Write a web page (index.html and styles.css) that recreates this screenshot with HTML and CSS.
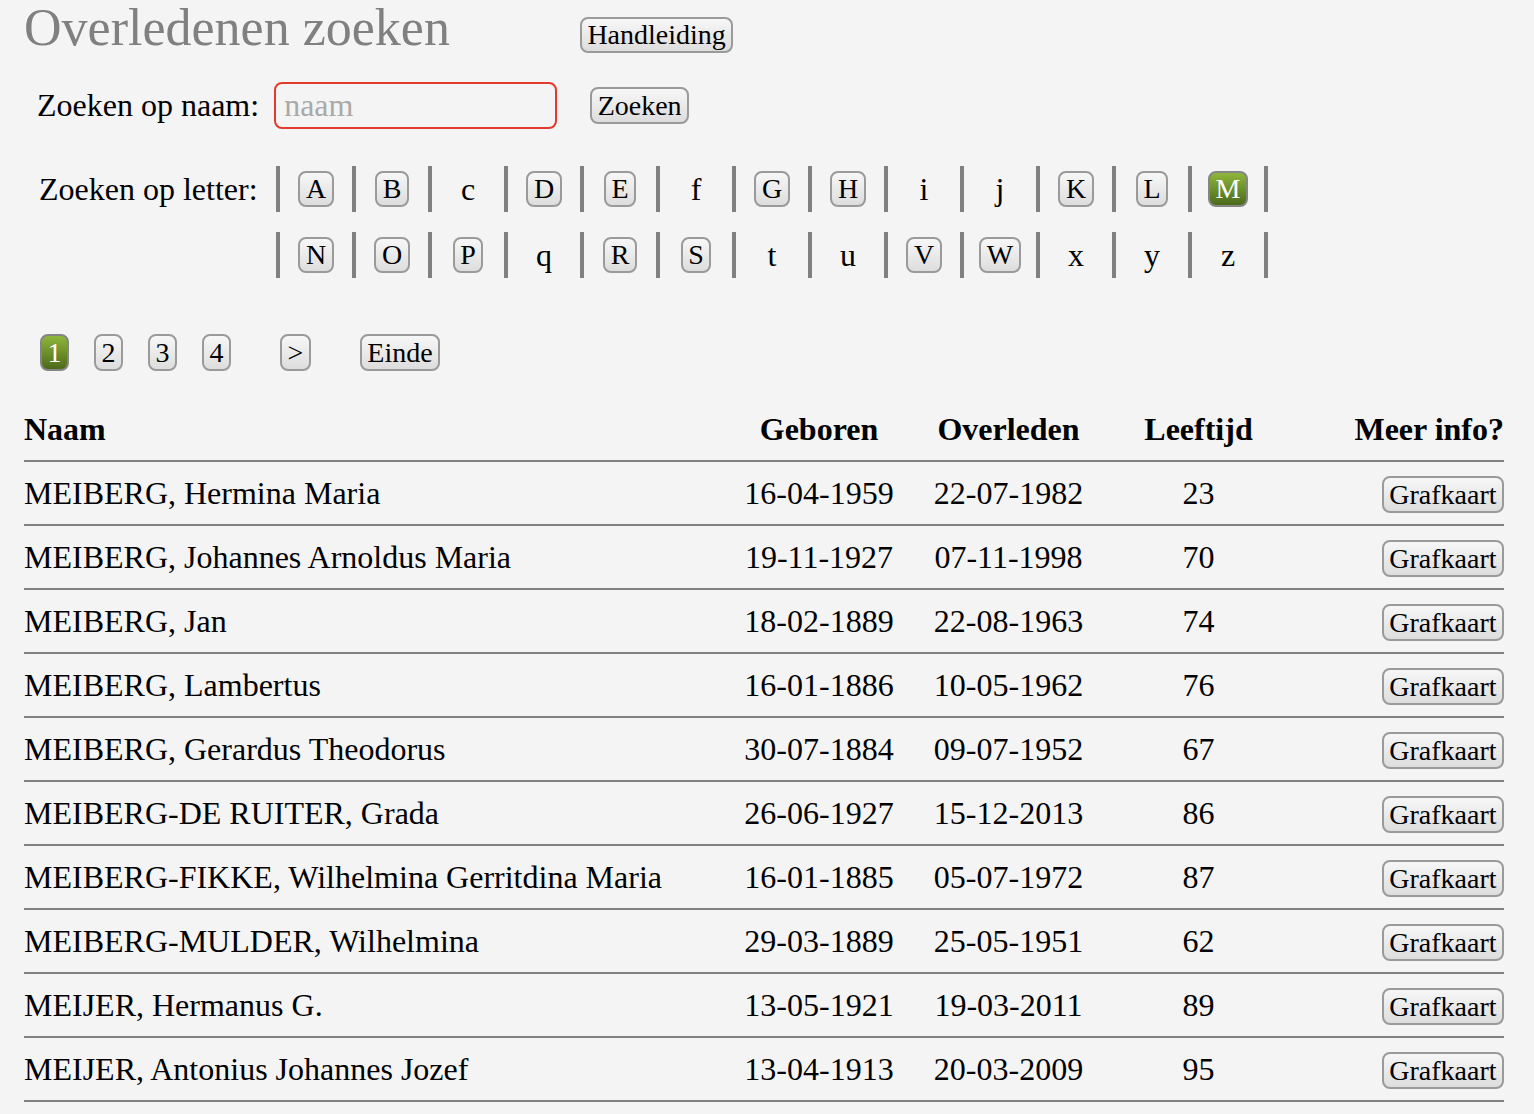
FILE: index.html
```html
<!DOCTYPE html>
<html lang="nl">
<head>
<meta charset="utf-8">
<title>Overledenen zoeken</title>
<link rel="stylesheet" href="styles.css">
</head>
<body>
<div class="page">
  <div class="title-row">
    <h1 class="title">Overledenen zoeken</h1>
    <button class="btn btn-manual" type="button">Handleiding</button>
  </div>

  <form class="name-row">
    <label class="label name-label" for="naam">Zoeken op naam:</label>
    <input class="name-input" id="naam" type="text" placeholder="naam">
    <button class="btn btn-search" type="button">Zoeken</button>
  </form>

  <div class="letter-row">
    <span class="label letter-label">Zoeken op letter:</span>
    <div class="letters">
      <div class="letter-line">
        <div class="cell"><button class="btn btn-letter" type="button">A</button></div>
        <div class="cell"><button class="btn btn-letter" type="button">B</button></div>
        <div class="cell"><span class="plain">c</span></div>
        <div class="cell"><button class="btn btn-letter" type="button">D</button></div>
        <div class="cell"><button class="btn btn-letter" type="button">E</button></div>
        <div class="cell"><span class="plain">f</span></div>
        <div class="cell"><button class="btn btn-letter" type="button">G</button></div>
        <div class="cell"><button class="btn btn-letter" type="button">H</button></div>
        <div class="cell"><span class="plain">i</span></div>
        <div class="cell"><span class="plain">j</span></div>
        <div class="cell"><button class="btn btn-letter" type="button">K</button></div>
        <div class="cell"><button class="btn btn-letter" type="button">L</button></div>
        <div class="cell"><button class="btn btn-letter btn-active" type="button">M</button></div>
      </div>
      <div class="letter-line">
        <div class="cell"><button class="btn btn-letter" type="button">N</button></div>
        <div class="cell"><button class="btn btn-letter" type="button">O</button></div>
        <div class="cell"><button class="btn btn-letter" type="button">P</button></div>
        <div class="cell"><span class="plain">q</span></div>
        <div class="cell"><button class="btn btn-letter" type="button">R</button></div>
        <div class="cell"><button class="btn btn-letter" type="button">S</button></div>
        <div class="cell"><span class="plain">t</span></div>
        <div class="cell"><span class="plain">u</span></div>
        <div class="cell"><button class="btn btn-letter" type="button">V</button></div>
        <div class="cell"><button class="btn btn-letter" type="button">W</button></div>
        <div class="cell"><span class="plain">x</span></div>
        <div class="cell"><span class="plain">y</span></div>
        <div class="cell"><span class="plain">z</span></div>
      </div>
    </div>
  </div>

  <div class="pager">
    <button class="btn btn-active" type="button">1</button>
    <button class="btn" type="button">2</button>
    <button class="btn" type="button">3</button>
    <button class="btn" type="button">4</button>
    <button class="btn pager-next" type="button">&gt;</button>
    <button class="btn pager-end" type="button">Einde</button>
  </div>

  <table class="results">
    <colgroup>
      <col class="col-name">
      <col class="col-born">
      <col class="col-died">
      <col class="col-age">
      <col class="col-info">
    </colgroup>
    <thead>
      <tr>
        <th class="c-left">Naam</th>
        <th>Geboren</th>
        <th>Overleden</th>
        <th>Leeftijd</th>
        <th class="c-right">Meer info?</th>
      </tr>
    </thead>
    <tbody>
      <tr><td class="c-left">MEIBERG, Hermina Maria</td><td>16-04-1959</td><td>22-07-1982</td><td>23</td><td class="c-right"><button class="btn" type="button">Grafkaart</button></td></tr>
      <tr><td class="c-left">MEIBERG, Johannes Arnoldus Maria</td><td>19-11-1927</td><td>07-11-1998</td><td>70</td><td class="c-right"><button class="btn" type="button">Grafkaart</button></td></tr>
      <tr><td class="c-left">MEIBERG, Jan</td><td>18-02-1889</td><td>22-08-1963</td><td>74</td><td class="c-right"><button class="btn" type="button">Grafkaart</button></td></tr>
      <tr><td class="c-left">MEIBERG, Lambertus</td><td>16-01-1886</td><td>10-05-1962</td><td>76</td><td class="c-right"><button class="btn" type="button">Grafkaart</button></td></tr>
      <tr><td class="c-left">MEIBERG, Gerardus Theodorus</td><td>30-07-1884</td><td>09-07-1952</td><td>67</td><td class="c-right"><button class="btn" type="button">Grafkaart</button></td></tr>
      <tr><td class="c-left">MEIBERG-DE RUITER, Grada</td><td>26-06-1927</td><td>15-12-2013</td><td>86</td><td class="c-right"><button class="btn" type="button">Grafkaart</button></td></tr>
      <tr><td class="c-left">MEIBERG-FIKKE, Wilhelmina Gerritdina Maria</td><td>16-01-1885</td><td>05-07-1972</td><td>87</td><td class="c-right"><button class="btn" type="button">Grafkaart</button></td></tr>
      <tr><td class="c-left">MEIBERG-MULDER, Wilhelmina</td><td>29-03-1889</td><td>25-05-1951</td><td>62</td><td class="c-right"><button class="btn" type="button">Grafkaart</button></td></tr>
      <tr><td class="c-left">MEIJER, Hermanus G.</td><td>13-05-1921</td><td>19-03-2011</td><td>89</td><td class="c-right"><button class="btn" type="button">Grafkaart</button></td></tr>
      <tr><td class="c-left">MEIJER, Antonius Johannes Jozef</td><td>13-04-1913</td><td>20-03-2009</td><td>95</td><td class="c-right"><button class="btn" type="button">Grafkaart</button></td></tr>
    </tbody>
  </table>
</div>
</body>
</html>
```

FILE: styles.css
```css
html, body {
  margin: 0;
  padding: 0;
  background: #f4f4f4;
}

body {
  font-family: "Liberation Serif", "Times New Roman", serif;
  font-size: 32px;
  color: #000;
}

.page {
  padding: 2px 24px 0 24px;
}

/* Title row */
.title-row {
  display: flex;
  align-items: flex-start;
  height: 52px;
}

.title {
  margin: 0;
  font-size: 52px;
  line-height: 52px;
  font-weight: normal;
  color: #808080;
  white-space: nowrap;
}

/* Buttons */
.btn {
  font-family: "Liberation Serif", "Times New Roman", serif;
  font-size: 28px;
  line-height: 31px;
  color: #000;
  padding: 1px 5.5px;
  margin: 0;
  border: 2px solid #9a9a9a;
  border-radius: 8px;
  background: linear-gradient(#f7f7f7, #dddddd);
  white-space: nowrap;
  cursor: pointer;
}

.btn-active {
  color: #fff;
  border-color: #858585;
  background: linear-gradient(#8fb63b, #4b6a1b);
}

.btn-manual {
  line-height: 30px;
  margin-left: 130px;
  margin-top: 15px;
}

/* Name search */
.name-row {
  display: flex;
  align-items: center;
  margin: 28px 0 0 0;
  height: 47px;
}

.label {
  white-space: nowrap;
}

.name-label {
  padding-left: 13px;
}

.name-input {
  box-sizing: border-box;
  width: 283px;
  height: 47px;
  margin-left: 15px;
  padding: 0 8px;
  border: 2px solid #e23b2e;
  border-radius: 8px;
  background: transparent;
  font-family: "Liberation Serif", "Times New Roman", serif;
  font-size: 32px;
  color: #000;
  outline: none;
}

.name-input::placeholder {
  color: #a9a9a9;
}

.btn-search {
  margin-left: 33px;
}

/* Letter search */
.letter-row {
  display: flex;
  align-items: flex-start;
  margin-top: 37px;
}

.letter-label {
  box-sizing: border-box;
  width: 252px;
  padding-left: 15px;
  line-height: 46px;
}

.letters {
  display: flex;
  flex-direction: column;
  gap: 20px;
}

.letter-line {
  display: flex;
}

.cell {
  width: 72px;
  height: 46px;
  border-left: 4px solid #808080;
  display: flex;
  align-items: center;
  justify-content: center;
}

.cell:last-child {
  border-right: 4px solid #808080;
}

.plain {
  font-size: 32px;
  line-height: 37px;
}

.btn-letter {
  line-height: 30px;
}

/* Pager */
.pager {
  display: flex;
  align-items: center;
  gap: 25px;
  margin-top: 56px;
  padding-left: 16px;
}

.pager-next,
.pager-end {
  margin-left: 24px;
}

/* Results table */
.results {
  width: 1480px;
  table-layout: fixed;
  border-collapse: separate;
  border-spacing: 0;
  margin-top: 27px;
}

.col-name { width: 700px; }
.col-born { width: 190px; }
.col-died { width: 189px; }
.col-age { width: 191px; }
.col-info { width: 210px; }

.results th,
.results td {
  padding: 0;
  line-height: 62px;
  text-align: center;
  vertical-align: middle;
  border-bottom: 2px solid #808080;
  white-space: nowrap;
}

.results th {
  font-weight: bold;
}

.results .c-left {
  text-align: left;
}

.results .c-right {
  text-align: right;
}

.results td .btn {
  vertical-align: middle;
  margin-bottom: 4px;
}
```
